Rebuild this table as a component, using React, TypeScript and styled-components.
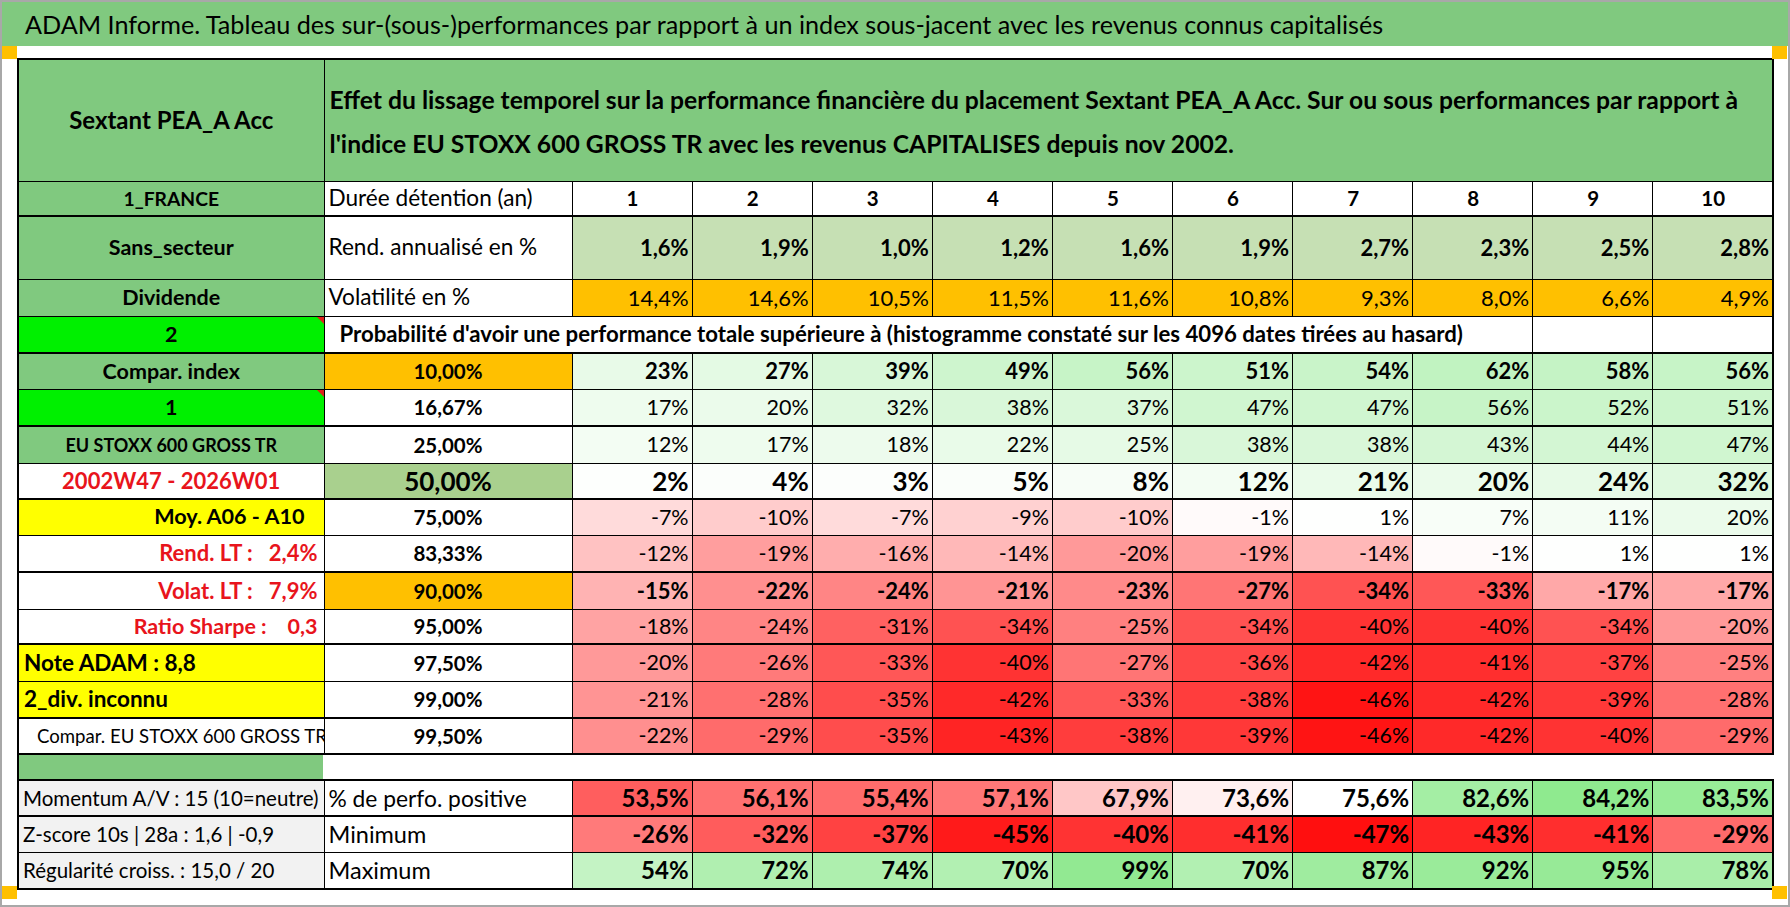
import React from "react";
import styled, { createGlobalStyle, css } from "styled-components";

const GREEN = "#80c97f";
const LIME = "#00f000";
const ORANGE = "#ffc000";
const YELLOW = "#ffff00";
const PALE = "#c6e0b4";
const SAGE = "#a9d08e";
const RED_TEXT = "#e8141c";
const GREY = "#f2f2f2";

const GlobalStyle = createGlobalStyle`
  html, body {
    margin: 0;
    padding: 0;
    background: #ffffff;
  }
  body {
    font-family: Lato, "Liberation Sans", Arial, sans-serif;
    color: #000;
  }
`;

const Frame = styled.div`
  position: relative;
  width: 1790px;
  height: 907px;
  box-sizing: border-box;
  border: 2px solid #a8a8a8;
  overflow: hidden;
  background: #fff;
`;

const TitleBar = styled.div`
  height: 44px;
  padding-left: 23px;
  background: ${GREEN};
  font-size: 25.2px;
  line-height: 44px;
  white-space: nowrap;
`;

const Sheet = styled.div`
  display: flex;
  flex-direction: column;
  padding: 12px 0 0 15px;
`;

// excel selection handles in the corners
const Handle = styled.span<{ $right?: boolean; $bottom?: boolean }>`
  position: absolute;
  width: 15px;
  height: 13px;
  background: ${ORANGE};
  left: ${(p) => (p.$right ? "1770px" : "0")};
  top: ${(p) => (p.$bottom ? "884px" : "44px")};
`;

const Grid = styled.table`
  width: 1755px;
  border-collapse: collapse;
  table-layout: fixed;
  border: 2px solid #000;
`;

const Col = styled.col<{ $w: number }>`
  width: ${(p) => p.$w}px;
`;

const Tr = styled.tr<{ $h: number; $thick?: boolean }>`
  height: ${(p) => p.$h}px;
  ${(p) =>
    p.$thick &&
    css`
      & > td {
        border-top-width: 2px;
      }
    `}
`;

const Td = styled.td`
  border: 1px solid #000;
  padding: 0 4px;
  overflow: hidden;
  white-space: nowrap;
  vertical-align: middle;
  line-height: 1;
`;

const Label = styled(Td)<{
  $bg?: string;
  $align?: string;
  $color?: string;
  $size?: number;
  $weight?: number;
  $note?: boolean;
  $pl?: number;
  $pr?: number;
}>`
  position: relative;
  white-space: pre;
  background: ${(p) => p.$bg ?? "#fff"};
  text-align: ${(p) => p.$align ?? "center"};
  color: ${(p) => p.$color ?? "#000"};
  font-size: ${(p) => p.$size ?? 21.5}px;
  font-weight: ${(p) => p.$weight ?? 700};
  padding-left: ${(p) => p.$pl ?? 4}px;
  padding-right: ${(p) => p.$pr ?? 4}px;
  ${(p) =>
    p.$note &&
    css`
      &::after {
        content: "";
        position: absolute;
        top: 0;
        right: 0;
        border-top: 7px solid #e0201b;
        border-left: 7px solid transparent;
      }
    `}
`;

const HeaderText = styled(Td)`
  background: ${GREEN};
  font-size: 24.7px;
  font-weight: 700;
  line-height: 44px;
  padding: 4px 0 0 5px;
`;

const RowHead = styled(Td)<{ $size?: number }>`
  font-size: ${(p) => p.$size ?? 22.6}px;
  padding-left: 4px;
`;

const Caption = styled(Td)`
  font-size: 22.2px;
  font-weight: 700;
  padding-left: 15px;
`;

const Quantile = styled(Td)<{ $bg?: string; $big?: boolean }>`
  text-align: center;
  background: ${(p) => p.$bg ?? "#fff"};
  font-weight: 700;
  font-size: ${(p) => (p.$big ? 26 : 20.5)}px;
`;

const Value = styled(Td)<{ $bg?: string; $bold?: boolean; $size?: number; $center?: boolean }>`
  text-align: ${(p) => (p.$center ? "center" : "right")};
  padding-right: 3px;
  background: ${(p) => p.$bg ?? "#fff"};
  font-weight: ${(p) => (p.$bold ? 700 : 400)};
  font-size: ${(p) => p.$size ?? 21.5}px;
`;

const Spacer = styled.div`
  display: flex;
  height: 24px;
`;

const SpacerBand = styled.div`
  width: 306px;
  box-sizing: border-box;
  border-left: 2px solid #000;
  background: ${GREEN};
`;

const COLS = [306, 248, ...Array(10).fill(120.1)];
const years = Array.from({ length: 10 }, (_, i) => i + 1);

const rend = ["1,6%", "1,9%", "1,0%", "1,2%", "1,6%", "1,9%", "2,7%", "2,3%", "2,5%", "2,8%"];
const vol = ["14,4%", "14,6%", "10,5%", "11,5%", "11,6%", "10,8%", "9,3%", "8,0%", "6,6%", "4,9%"];

const red = (v: number) => {
  const g = Math.max(12, Math.round(255 - Math.abs(v) * 5.1));
  return `rgb(255, ${g}, ${g})`;
};

const green = (v: number, k = 1) => {
  const rb = Math.round(255 - v * k);
  const g = Math.round(255 - v * k * 0.2);
  return `rgb(${rb}, ${g}, ${rb})`;
};

const tint = (v: number) => (v < 0 ? red(v) : green(v));

const momentumTint = (v: number) => {
  const mid = 75.6;
  if (v <= mid) {
    const g = Math.round(255 - (mid - v) * 7.3);
    return `rgb(255, ${g}, ${g})`;
  }
  const rb = Math.round(255 - (v - mid) * 13);
  const g = Math.round(255 - (v - mid) * 2.4);
  return `rgb(${rb}, ${g}, ${rb})`;
};

type Kind = "green" | "lime" | "red" | "yellow" | "plain";

const kindBg: Record<Kind, string> = {
  green: GREEN,
  lime: LIME,
  red: "#fff",
  yellow: YELLOW,
  plain: "#fff",
};

type QRow = {
  label: string;
  kind: Kind;
  align?: "left" | "center" | "right";
  size?: number;
  weight?: number;
  pl?: number;
  pr?: number;
  quant: string;
  quantBg?: string;
  bigQuant?: boolean;
  values: number[];
  bold?: boolean;
  big?: boolean;
  thick?: boolean;
  h: number;
};

const quantRows: QRow[] = [
  { label: "Compar. index", kind: "green", quant: "10,00%", quantBg: ORANGE, values: [23, 27, 39, 49, 56, 51, 54, 62, 58, 56], bold: true, thick: true, h: 36 },
  { label: "1", kind: "lime", quant: "16,67%", values: [17, 20, 32, 38, 37, 47, 47, 56, 52, 51], h: 37 },
  { label: "EU STOXX 600 GROSS TR", kind: "green", size: 18, quant: "25,00%", values: [12, 17, 18, 22, 25, 38, 38, 43, 44, 47], thick: true, h: 37 },
  { label: "2002W47 - 2026W01", kind: "red", size: 22, quant: "50,00%", quantBg: SAGE, bigQuant: true, values: [2, 4, 3, 5, 8, 12, 21, 20, 24, 32], bold: true, big: true, h: 36 },
  { label: "Moy. A06 - A10", kind: "yellow", align: "right", size: 21.6, pr: 19, quant: "75,00%", values: [-7, -10, -7, -9, -10, -1, 1, 7, 11, 20], thick: true, h: 36 },
  { label: "Rend. LT :   2,4%", kind: "red", align: "right", size: 22, pr: 6, quant: "83,33%", values: [-12, -19, -16, -14, -20, -19, -14, -1, 1, 1], h: 37 },
  { label: "Volat. LT :   7,9%", kind: "red", align: "right", size: 22, pr: 6, quant: "90,00%", quantBg: ORANGE, values: [-15, -22, -24, -21, -23, -27, -34, -33, -17, -17], bold: true, thick: true, h: 37 },
  { label: "Ratio Sharpe :    0,3", kind: "red", align: "right", size: 21.5, pr: 6, quant: "95,00%", values: [-18, -24, -31, -34, -25, -34, -40, -40, -34, -20], h: 35 },
  { label: "Note ADAM : 8,8", kind: "yellow", align: "left", size: 22.5, pl: 5, quant: "97,50%", values: [-20, -26, -33, -40, -27, -36, -42, -41, -37, -25], thick: true, h: 37 },
  { label: "2_div. inconnu", kind: "yellow", align: "left", size: 22.5, pl: 5, quant: "99,00%", values: [-21, -28, -35, -42, -33, -38, -46, -42, -39, -28], h: 37 },
  { label: "Compar. EU STOXX 600 GROSS TR", kind: "plain", align: "left", size: 18.6, weight: 400, pl: 18, quant: "99,50%", values: [-22, -29, -35, -43, -38, -39, -46, -42, -40, -29], thick: true, h: 36 },
];

const momentum = [53.5, 56.1, 55.4, 57.1, 67.9, 73.6, 75.6, 82.6, 84.2, 83.5];
const minimum = [-26, -32, -37, -45, -40, -41, -47, -43, -41, -29];
const maximum = [54, 72, 74, 70, 99, 70, 87, 92, 95, 78];

const pct = (v: number) => `${v}%`;
const dec = (v: number) => `${v.toFixed(1).replace(".", ",")}%`;

const Columns = () => (
  <colgroup>
    {COLS.map((w, i) => (
      <Col key={i} $w={w} />
    ))}
  </colgroup>
);

const App = () => {
  return (
    <Frame>
      <GlobalStyle />
      <TitleBar>
        ADAM Informe. Tableau des sur-(sous-)performances par rapport à un index sous-jacent avec les revenus connus capitalisés
      </TitleBar>
      <Sheet>
        <Grid>
          <Columns />
          <tbody>
            <Tr $h={122}>
              <Label $bg={GREEN} $size={24}>
                Sextant PEA_A Acc
              </Label>
              <HeaderText colSpan={11}>
                Effet du lissage temporel sur la performance financière du placement Sextant PEA_A Acc. Sur ou sous performances par rapport à
                <br />
                l'indice EU STOXX 600 GROSS TR avec les revenus CAPITALISES depuis nov 2002.
              </HeaderText>
            </Tr>
            <Tr $h={35}>
              <Label $bg={GREEN} $size={19.3}>
                1_FRANCE
              </Label>
              <RowHead>Durée détention (an)</RowHead>
              {years.map((y) => (
                <Value key={y} $bold $center $size={20.5}>
                  {y}
                </Value>
              ))}
            </Tr>
            <Tr $h={63} $thick>
              <Label $bg={GREEN}>Sans_secteur</Label>
              <RowHead>Rend. annualisé en %</RowHead>
              {rend.map((r, i) => (
                <Value key={i} $bold $bg={PALE} $size={22}>
                  {r}
                </Value>
              ))}
            </Tr>
            <Tr $h={37}>
              <Label $bg={GREEN}>Dividende</Label>
              <RowHead>Volatilité en %</RowHead>
              {vol.map((r, i) => (
                <Value key={i} $bg={ORANGE} $size={22}>
                  {r}
                </Value>
              ))}
            </Tr>
            <Tr $h={37}>
              <Label $bg={LIME} $note>
                2
              </Label>
              <Caption colSpan={9}>
                Probabilité d'avoir une performance totale supérieure à (histogramme constaté sur les 4096 dates tirées au hasard)
              </Caption>
              <Value />
              <Value />
            </Tr>
            {quantRows.map((row) => (
              <Tr key={row.label} $h={row.h} $thick={row.thick}>
                <Label
                  $bg={kindBg[row.kind]}
                  $color={row.kind === "red" ? RED_TEXT : "#000"}
                  $align={row.align}
                  $size={row.size}
                  $weight={row.weight}
                  $pl={row.pl}
                  $pr={row.pr}
                  $note={row.kind === "lime"}
                >
                  {row.label}
                </Label>
                <Quantile $bg={row.quantBg} $big={row.bigQuant}>
                  {row.quant}
                </Quantile>
                {row.values.map((v, i) => (
                  <Value key={i} $bg={tint(v)} $bold={row.bold} $size={row.big ? 26 : row.bold ? 22 : 21.5}>
                    {pct(v)}
                  </Value>
                ))}
              </Tr>
            ))}
          </tbody>
        </Grid>
        <Spacer>
          <SpacerBand />
        </Spacer>
        <Grid>
          <Columns />
          <tbody>
            <Tr $h={36}>
              <Label $bg={GREY} $align="left" $weight={400} $size={20.5}>
                Momentum A/V : 15 (10=neutre)
              </Label>
              <RowHead $size={22.8}>% de perfo. positive</RowHead>
              {momentum.map((v, i) => (
                <Value key={i} $bold $bg={momentumTint(v)} $size={24}>
                  {dec(v)}
                </Value>
              ))}
            </Tr>
            <Tr $h={36} $thick>
              <Label $bg={GREY} $align="left" $weight={400} $size={20.5}>
                Z-score 10s | 28a : 1,6 | -0,9
              </Label>
              <RowHead $size={23.5}>Minimum</RowHead>
              {minimum.map((v, i) => (
                <Value key={i} $bold $bg={red(v)} $size={24}>
                  {pct(v)}
                </Value>
              ))}
            </Tr>
            <Tr $h={37}>
              <Label $bg={GREY} $align="left" $weight={400} $size={20.5}>
                Régularité croiss. : 15,0 / 20
              </Label>
              <RowHead $size={23.5}>Maximum</RowHead>
              {maximum.map((v, i) => (
                <Value key={i} $bold $bg={green(v, 1.1)} $size={24}>
                  {pct(v)}
                </Value>
              ))}
            </Tr>
          </tbody>
        </Grid>
      </Sheet>
      <Handle />
      <Handle $right />
      <Handle $bottom />
      <Handle $right $bottom />
    </Frame>
  );
};

export default App;
